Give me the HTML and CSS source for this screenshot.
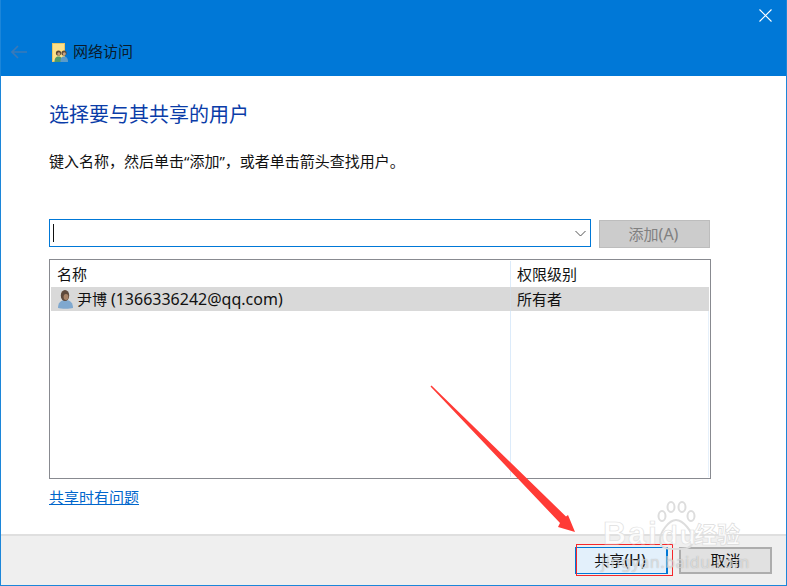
FILE: index.html
```html
<!DOCTYPE html>
<html lang="zh-CN">
<head>
<meta charset="utf-8">
<title>网络访问</title>
<link rel="stylesheet" href="styles.css">
</head>
<body>
<div class="window">
  <header class="titlebar">
    <div class="close-row">
      <svg class="close" width="13" height="13" viewBox="0 0 13 13"><path d="M.5.5l12 12M12.500.5l-12 12" stroke="#fff" stroke-width="1.100" fill="none"/></svg>
    </div>
    <div class="nav-row">
      <svg class="back" width="16" height="14" viewBox="0 0 16 14"><path d="M16 7H1.500M7 1L1 7l6 6" stroke="#3a79b8" stroke-width="1.600" fill="none"/></svg>
      <svg class="app-icon" width="16" height="20" viewBox="0 0 16 20">
        <rect x="0.500" y="0.500" width="12" height="18" fill="#fbe08a" stroke="#e8c665" stroke-width="1"/>
        <circle cx="6.500" cy="10" r="2.600" fill="#5a4633"/>
        <circle cx="6.800" cy="10.800" r="1.500" fill="#c99f7c"/>
        <path d="M2.500 19c0-4 1.500-5.500 4-5.500s4 1.500 4 5.500z" fill="#4f9a6b"/>
        <circle cx="12" cy="10" r="2.600" fill="#5f4f3c"/>
        <circle cx="12.300" cy="10.800" r="1.500" fill="#c7a184"/>
        <path d="M8.500 19c0-4 1-5.500 3.500-5.500s4 1.500 4 5.500z" fill="#5b9bc9"/>
      </svg>
      <span class="title">网络访问</span>
    </div>
  </header>
  <main class="content">
    <h1 class="heading">选择要与其共享的用户</h1>
    <p class="desc">键入名称，然后单击“添加”，或者单击箭头查找用户。</p>
    <div class="input-row">
      <div class="combo">
        <span class="caret"></span>
        <svg class="chev" width="11" height="7" viewBox="0 0 11 7"><path d="M.5 1l5 5 5-5" stroke="#555" stroke-width="1" fill="none"/></svg>
      </div>
      <button class="btn-add" type="button">添加<span class="lat">(A)</span></button>
    </div>
    <div class="list">
      <div class="list-row list-head">
        <div class="cell-name">名称</div>
        <div class="cell-level">权限级别</div>
      </div>
      <div class="list-row list-sel">
        <div class="cell-name">
          <svg class="user" width="17" height="20" viewBox="0 0 17 20">
            <path d="M1 19c0-5 2.500-8 7.500-8s7.500 3 7.500 8c-3 1-12 1-15 0z" fill="#7fa8cf"/>
            <ellipse cx="8" cy="6.500" rx="4.200" ry="5.500" fill="#5f4a3c"/>
            <ellipse cx="9" cy="8" rx="2.400" ry="3" fill="#a98468"/>
          </svg>
          <span>尹博 <span class="lat">(1366336242@qq.com)</span></span>
        </div>
        <div class="cell-level">所有者</div>
      </div>
      <div class="list-rest">
        <div class="rest-name"></div>
        <div class="rest-level"></div>
      </div>
    </div>
    <a class="help" href="#">共享时有问题</a>
  </main>
  <footer class="footer">
    <button class="btn btn-share" type="button">共享<span class="lat">(H)</span></button>
    <button class="btn btn-cancel" type="button">取消</button>
  </footer>

  <svg class="arrow" width="787" height="586" viewBox="0 0 787 586">
    <path d="M430.500 386.500L431.500 385.500 566 516.500 568 515 575 532 558 527 560 523z" fill="#ff3b36"/>
  </svg>
  <div class="highlight"></div>
  <div class="watermark">
    <svg class="paw" width="40" height="52" viewBox="0 0 40 52" fill="none" stroke="#dddddd" stroke-width="2">
      <ellipse cx="5" cy="15" rx="3.500" ry="5"/>
      <ellipse cx="14" cy="6" rx="3.500" ry="5"/>
      <ellipse cx="25" cy="6" rx="3.500" ry="5"/>
      <ellipse cx="34" cy="15" rx="3.500" ry="5"/>
      <path d="M19 19c7 0 17 12 17 20 0 9-9 9-17 9s-16 0-16-9c0-8 9-20 16-20z"/>
    </svg>
    <span class="wm-main">Bai<span class="wm-du">du</span></span>
    <span class="wm-cn">经验</span>
    <span class="wm-url">jingyan.baidu.com</span>
  </div>
</div>
</body>
</html>
```
FILE: styles.css
```css
* { box-sizing: border-box; }
html, body { margin: 0; padding: 0; }
body {
  width: 787px;
  height: 586px;
  overflow: hidden;
  background: #fff;
  font-family: "Noto Sans", "Noto Sans CJK SC", sans-serif;
  color: #111;
}
.lat { font-size: 16px; }
.window {
  position: relative;
  width: 787px;
  height: 586px;
  display: flex;
  flex-direction: column;
  border: 1px solid #1c86d9;
  border-top: 0;
  overflow: hidden;
}
.titlebar {
  height: 76px;
  flex: none;
  margin: 0 -1px;
  background: #0078d7;
  display: flex;
  flex-direction: column;
}
.close-row {
  height: 38px;
  display: flex;
  justify-content: flex-end;
  padding: 9px 15px 0 0;
}
.nav-row {
  display: flex;
  align-items: center;
  height: 27px;
  padding-left: 11px;
}
.back { margin-right: 25px; }
.app-icon { margin-right: 5px; margin-top: 2px; }
.title {
  font-size: 15px;
  line-height: 20px;
  color: #0a1a2a;
  margin-bottom: 2px;
}
.content {
  flex: 1;
  padding: 0 75px 0 48px;
  display: flex;
  flex-direction: column;
}
.heading {
  margin: 25px 0 0;
  font-size: 20px;
  font-weight: 400;
  line-height: 28px;
  color: #0a3ca8;
}
.desc {
  margin: 21px 0 0;
  font-size: 15px;
  line-height: 22px;
  color: #111;
}
.input-row {
  display: flex;
  margin-top: 47px;
  gap: 8px;
}
.combo {
  width: 542px;
  height: 28px;
  border: 1px solid #0078d7;
  display: flex;
  align-items: center;
  justify-content: space-between;
  padding: 0 4px 0 3px;
  background: #fff;
}
.caret {
  width: 1px;
  height: 18px;
  background: #111;
}
.btn-add {
  width: 111px;
  height: 28px;
  margin-top: 1px;
  border: 1px solid #bdbdbd;
  background: #cccccc;
  color: #808080;
  font: inherit;
  font-size: 15px;
  padding: 0 2px 1px 0;
}
.list {
  margin-top: 11px;
  width: 662px;
  height: 220px;
  border: 1px solid #888a90;
  padding: 1px;
  display: flex;
  flex-direction: column;
  font-size: 15px;
}
.list-row {
  display: flex;
  flex: none;
}
.list-head { height: 26px; line-height: 26px; }
.list-sel { height: 24px; line-height: 24px; background: #d9d9d9; }
.cell-name {
  width: 460px;
  padding-left: 6px;
  display: flex;
  align-items: center;
  gap: 2px;
  border-right: 1px solid #dcebfa;
}
.list-sel .cell-name { border-right-color: #d3dde6; }
.user { flex: none; margin-right: 1px; }
.cell-level {
  flex: 1;
  padding-left: 6px;
}
.list-rest {
  flex: 1;
  display: flex;
}
.rest-name {
  width: 460px;
  border-right: 1px solid #dcebfa;
}
.rest-level {
  flex: 1;
  border-right: 1px solid #e6f0fa;
}
.help {
  margin-top: 7px;
  align-self: flex-start;
  font-size: 15px;
  line-height: 22px;
  color: #0066cc;
  text-decoration: underline;
}
.footer {
  flex: none;
  height: 51px;
  background: #efefef;
  border-top: 2px solid #dfdfdf;
  display: flex;
  justify-content: flex-end;
  gap: 11px;
  padding: 11px 14px 0 0;
}
.btn {
  width: 93px;
  height: 27px;
  font: inherit;
  font-size: 15px;
  color: #111;
  padding: 0 0 2px;
}
.btn-share {
  background: #e3f0fb;
  border: 2px solid #0078d7;
  border-width: 1px 1px 1px 2px;
  border-right-width: 2px;
  padding-right: 3px;
}
.btn-cancel {
  background: #e1e1e1;
  border: 2px solid #adadad;
}
.arrow {
  position: absolute;
  left: -1px;
  top: 0;
  pointer-events: none;
}
.highlight {
  position: absolute;
  left: 575px;
  top: 544px;
  width: 97px;
  height: 32px;
  border: 1px solid #f5272b;
}
.watermark {
  position: absolute;
  left: 600px;
  top: 498px;
  width: 187px;
  height: 88px;
  pointer-events: none;
}
.paw { position: absolute; left: 56px; top: 3px; }
.wm-main {
  position: absolute;
  left: 2px;
  top: 17px;
  font-family: "Liberation Sans", sans-serif;
  font-size: 32px;
  line-height: 36px;
  font-weight: 700;
  color: rgba(255,255,255,.85);
  -webkit-text-stroke: .7px #e0e0e0;
  letter-spacing: 2px;
}
.wm-du { margin-left: 3px; font-size: 26px; }
.wm-cn {
  position: absolute;
  left: 93px;
  top: 22px;
  font-size: 23px;
  line-height: 28px;
  font-weight: 700;
  color: rgba(255,255,255,.85);
  -webkit-text-stroke: .7px #dcdcdc;
}
.wm-url {
  position: absolute;
  left: 0;
  top: 54px;
  font-size: 16px;
  line-height: 20px;
  color: rgba(255,255,255,.55);
  text-shadow: 0 0 1px rgba(110,110,110,.55);
  letter-spacing: .6px;
}
```
